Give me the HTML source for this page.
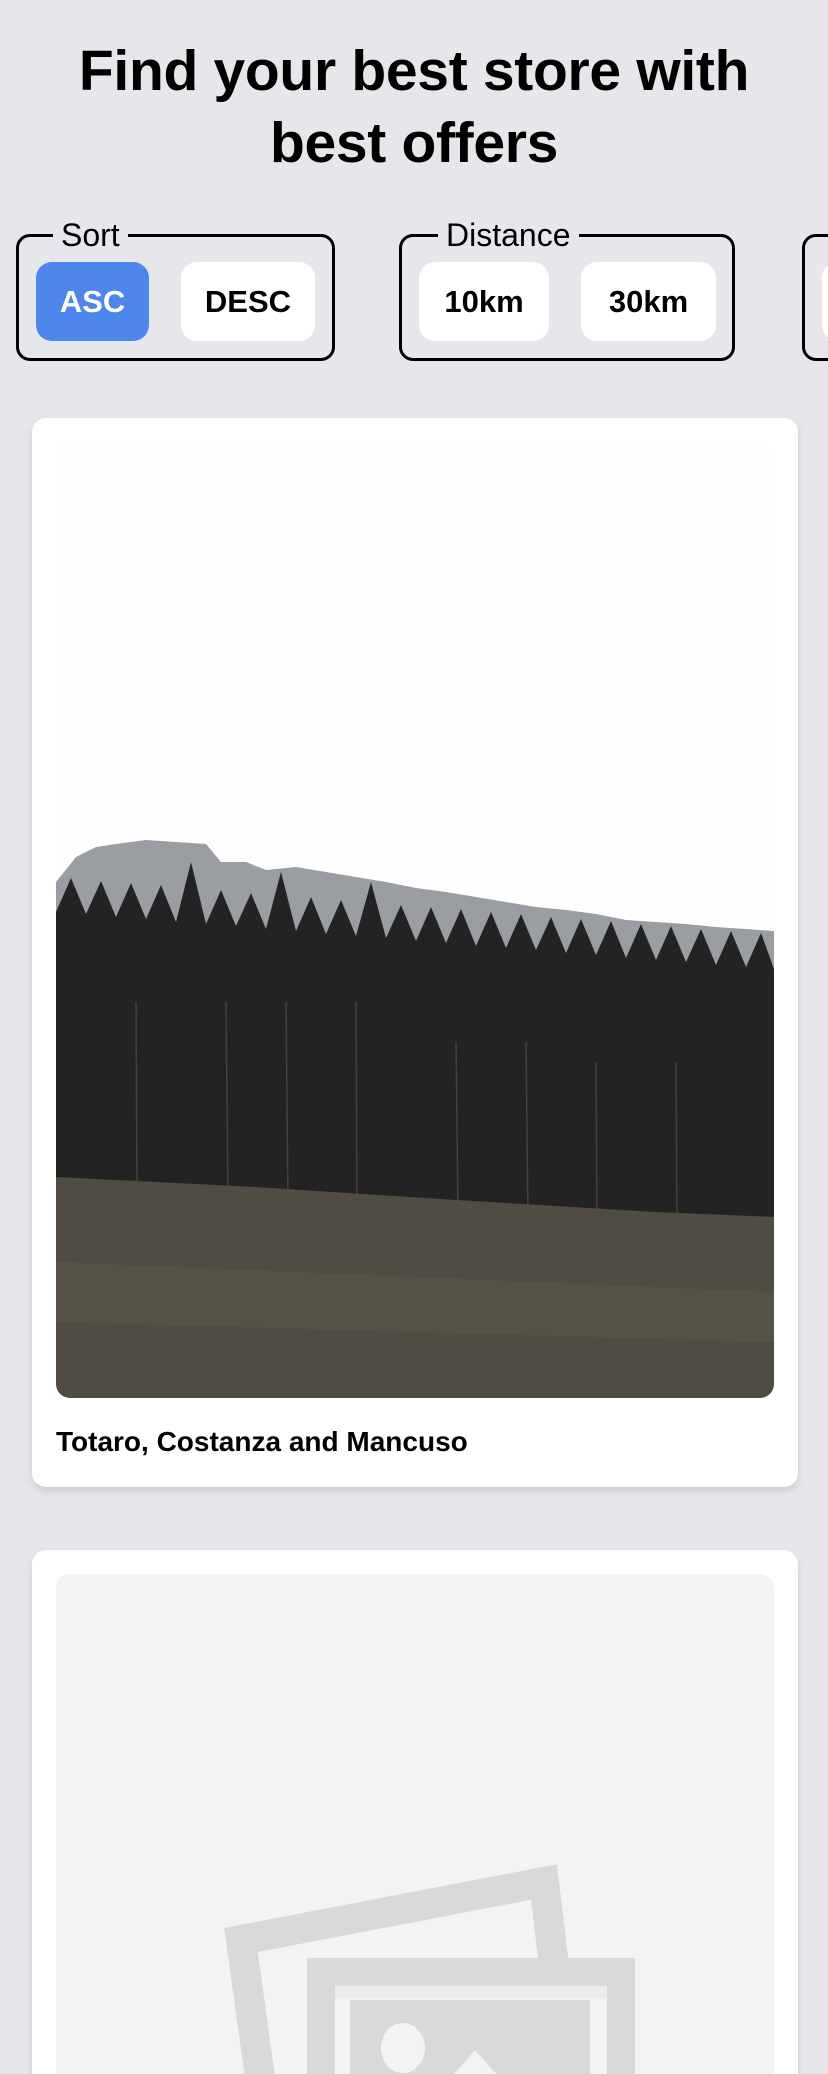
<!DOCTYPE html>
<html><head><meta charset="utf-8">
<style>
*{box-sizing:border-box;margin:0;padding:0}
html,body{width:828px;height:2074px;overflow:hidden;background:#e5e7eb;font-family:"Liberation Sans",Arial,sans-serif;color:#000}
#wrap{position:relative;width:828px;height:2074px;overflow:hidden}
h1{position:absolute;left:0;top:35px;width:828px;text-align:center;font-size:57px;line-height:72px;font-weight:700;letter-spacing:-0.3px}
fieldset{position:absolute;top:222px;height:139px;border:3px solid #000;border-radius:14px;padding:0}
legend{font-size:32px;line-height:26px;padding:0 8px;margin-left:34px}
.btn{position:absolute;top:14px;height:79px;border-radius:16px;background:#fff;font-size:31px;font-weight:700;display:flex;align-items:center;justify-content:center}
.card{position:absolute;left:32px;width:766px;background:#fff;border-radius:14px;box-shadow:0 4px 8px rgba(0,0,0,0.12)}
.img{position:absolute;left:24px;width:718px;border-radius:14px;overflow:hidden}
</style></head><body><div id="wrap">
<h1>Find your best store with<br>best offers</h1>

<fieldset style="left:16px;width:319px"><legend>Sort</legend>
<div class="btn" style="left:17px;width:113px;background:#4f86ec;color:#fff">ASC</div>
<div class="btn" style="left:162px;width:134px">DESC</div>
</fieldset>
<fieldset style="left:399px;width:336px"><legend style="margin-left:36px">Distance</legend>
<div class="btn" style="left:17px;width:130px">10km</div>
<div class="btn" style="left:179px;width:135px">30km</div>
</fieldset>
<fieldset style="left:802px;width:200px"><legend>&nbsp;</legend>
<div class="btn" style="left:17px;width:130px"></div>
</fieldset>

<div class="card" style="top:418px;height:1069px">
<div class="img" style="top:24px;height:956px">
<svg width="718" height="956" viewBox="0 0 718 956">
<rect width="718" height="956" fill="#fefefe"/>
<polygon fill="#9a9ea2" points="0,440 20,415 40,405 60,402 90,398 120,400 150,402 165,420 190,420 210,428 240,425 270,430 300,435 330,440 360,446 390,450 420,455 450,460 480,465 510,468 540,472 570,478 600,480 630,482 660,485 690,487 718,489 718,560 0,560"/>
<polygon fill="#232323" points="0,470 15,436 30,472 45,439 60,475 75,441 90,477 105,443 120,480 135,420 150,482 165,448 180,484 195,451 210,487 225,430 240,489 255,455 270,492 285,458 300,494 315,440 330,496 345,463 360,499 375,465 390,501 405,467 420,504 435,470 450,506 465,472 480,508 495,475 510,511 525,477 540,513 555,479 570,516 585,482 600,518 615,484 630,520 645,487 660,523 675,489 690,525 705,491 718,527 718,790 0,790"/>
<g stroke="#5a5650" stroke-width="1.5" opacity="0.6">
<line x1="170" y1="560" x2="172" y2="760"/><line x1="230" y1="560" x2="232" y2="760"/><line x1="300" y1="560" x2="301" y2="765"/><line x1="400" y1="600" x2="402" y2="770"/><line x1="470" y1="600" x2="472" y2="775"/><line x1="540" y1="620" x2="541" y2="780"/><line x1="620" y1="620" x2="621" y2="785"/><line x1="80" y1="560" x2="81" y2="760"/>
</g>
<polygon fill="#514c42" points="0,735 200,745 400,758 600,770 718,775 718,956 0,956"/>
<polygon fill="#5a5648" opacity="0.6" points="0,820 718,850 718,900 0,880"/>
</svg>
</div>
<div style="position:absolute;left:24px;top:1008px;font-size:28px;font-weight:700;line-height:32px">Totaro, Costanza and Mancuso</div>
</div>

<div class="card" style="top:1550px;height:600px">
<div class="img" style="top:24px;height:600px;background:#f3f3f3">
<svg width="718" height="600" viewBox="0 0 718 600" style="position:absolute;left:0;top:0">
<g transform="translate(-56,-1574)">
<polygon fill="none" stroke="#d9d9d9" stroke-width="30" points="241,1940 544,1882 570,2100 270,2150"/>
<rect x="307" y="1958" width="328" height="200" fill="#f3f3f3"/>
<rect x="321" y="1972" width="300" height="200" fill="none" stroke="#d9d9d9" stroke-width="28"/>
<rect x="350" y="2000" width="240" height="150" fill="#d9d9d9"/>
<rect x="335" y="1986" width="272" height="12" fill="#ececec"/>
<ellipse cx="403" cy="2048" rx="22" ry="25" fill="#f3f3f3"/>
<polygon fill="#f3f3f3" points="440,2090 475,2050 510,2090"/>
</g>
</svg>
</div>
</div>
</div></body></html>
